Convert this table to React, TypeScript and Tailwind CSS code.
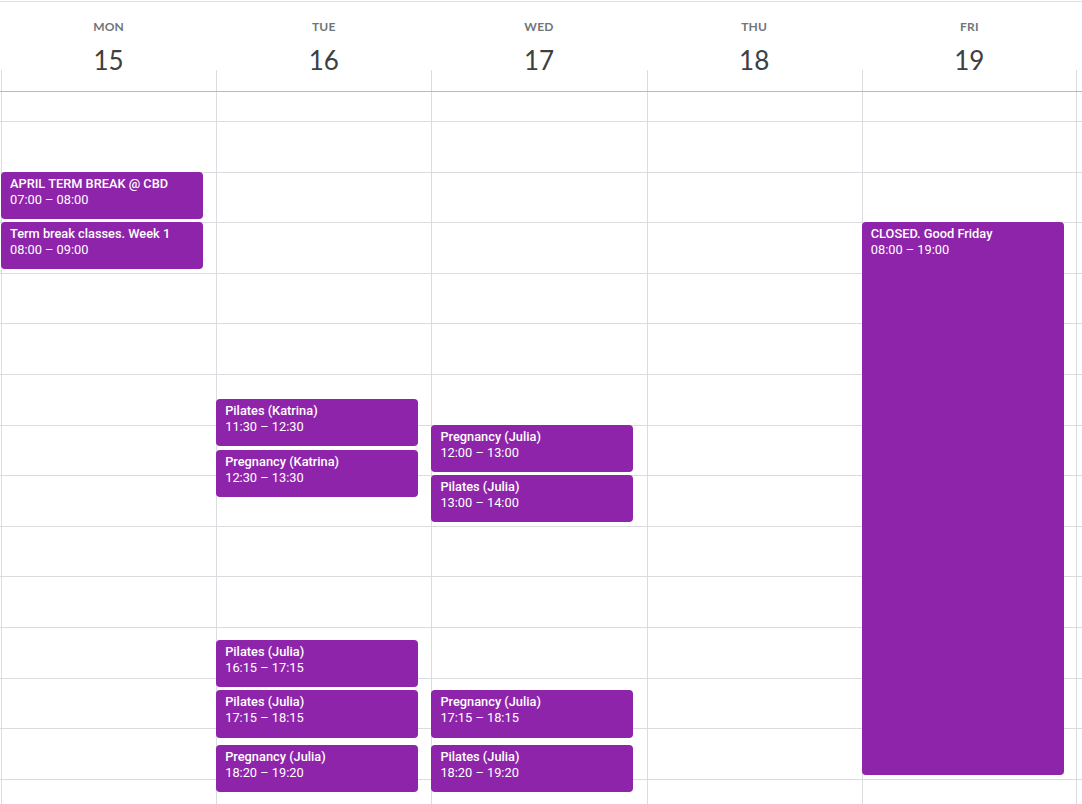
import React from "react";

const HOUR = 50.615;
const FIRST_LINE = 29; // body y of 06:00 line

type Ev = { title: string; start: number; end: number; label: string };

const days: { name: string; num: string; events: Ev[] }[] = [
  {
    name: "MON",
    num: "15",
    events: [
      { title: "APRIL TERM BREAK @ CBD", start: 7, end: 8, label: "07:00 – 08:00" },
      { title: "Term break classes. Week 1", start: 8, end: 9, label: "08:00 – 09:00" },
    ],
  },
  {
    name: "TUE",
    num: "16",
    events: [
      { title: "Pilates (Katrina)", start: 11.5, end: 12.5, label: "11:30 – 12:30" },
      { title: "Pregnancy (Katrina)", start: 12.5, end: 13.5, label: "12:30 – 13:30" },
      { title: "Pilates (Julia)", start: 16.25, end: 17.25, label: "16:15 – 17:15" },
      { title: "Pilates (Julia)", start: 17.25, end: 18.25, label: "17:15 – 18:15" },
      { title: "Pregnancy (Julia)", start: 18 + 1 / 3, end: 19 + 1 / 3, label: "18:20 – 19:20" },
    ],
  },
  {
    name: "WED",
    num: "17",
    events: [
      { title: "Pregnancy (Julia)", start: 12, end: 13, label: "12:00 – 13:00" },
      { title: "Pilates (Julia)", start: 13, end: 14, label: "13:00 – 14:00" },
      { title: "Pregnancy (Julia)", start: 17.25, end: 18.25, label: "17:15 – 18:15" },
      { title: "Pilates (Julia)", start: 18 + 1 / 3, end: 19 + 1 / 3, label: "18:20 – 19:20" },
    ],
  },
  { name: "THU", num: "18", events: [] },
  {
    name: "FRI",
    num: "19",
    events: [{ title: "CLOSED. Good Friday", start: 8, end: 19, label: "08:00 – 19:00" }],
  },
];

export default function App() {
  const rows = Array.from({ length: 14 });
  return (
    <div
      className="w-[1082px] h-[804px] overflow-hidden bg-white pt-[1px]"
      style={{ fontFamily: "Roboto, 'Liberation Sans', sans-serif" }}
    >
      <div className="border-t border-[#e3e3e3]" />
      {/* header */}
      <div className="border-b border-[#b9b9b9]">
        <div className="ml-[1px] grid grid-cols-[repeat(5,215.2px)]">
          {days.map((d, i) => (
            <div key={d.name} className="flex flex-col">
              <div
                className="h-[68px] flex flex-col items-center"
                style={{ fontFamily: "Lato, 'Noto Sans', sans-serif" }}
              >
                <div className="mt-[17px] h-[16px] leading-[16px] text-[12px] font-bold text-[#70757a] tracking-[0.2px]">
                  {d.name}
                </div>
                <div className="mt-[10px] h-[30px] leading-[30px] text-[26px] text-[#3c4043]">
                  {d.num}
                </div>
              </div>
              <div
                className={`h-[21px] border-l border-[#dadce0] ${i === 4 ? "border-r" : ""}`}
              />
            </div>
          ))}
        </div>
      </div>
      {/* body */}
      <div className="relative h-[712px]">
        <div className="flex flex-col">
          <div className="h-[30px] border-b border-[#dadce0]" />
          {rows.map((_, i) => (
            <div key={i} className="h-[50.615px] border-b border-[#dadce0] shrink-0" />
          ))}
        </div>
        <div className="absolute inset-0 ml-[1px] grid grid-cols-[repeat(5,215.2px)]">
          {days.map((d, i) => (
            <div
              key={d.name}
              className={`relative border-l border-[#dadce0] ${i === 4 ? "border-r" : ""}`}
            >
              {d.events.map((e, j) => (
                <div
                  key={j}
                  className="absolute left-[-1px] w-[202px] rounded-[4px] bg-[#8e24aa] text-white text-[12.8px] leading-[16px] pl-[9px] pt-[4px] overflow-hidden"
                  style={{
                    top: FIRST_LINE + (e.start - 6) * HOUR,
                    height: (e.end - e.start) * HOUR - 3.5,
                  }}
                >
                  <div className="font-medium whitespace-nowrap">{e.title}</div>
                  <div className="whitespace-nowrap">{e.label}</div>
                </div>
              ))}
            </div>
          ))}
        </div>
      </div>
    </div>
  );
}
